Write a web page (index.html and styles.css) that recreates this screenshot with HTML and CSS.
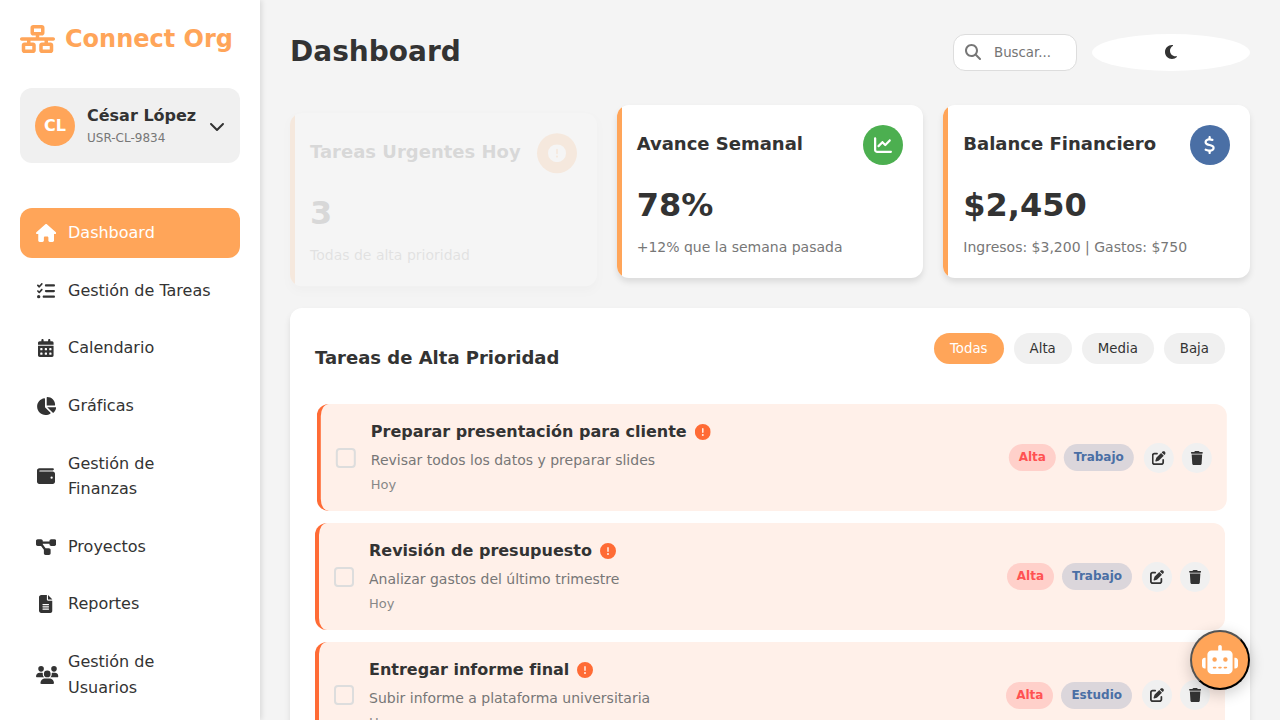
FILE: index.html
```html
<!DOCTYPE html>
<html lang="es">
<head>
<meta charset="UTF-8">
<title>Connect Org</title>
<link rel="stylesheet" href="styles.css">
</head>
<body>
<svg class="sprite" aria-hidden="true">
  <symbol id="i-network" viewBox="0 0 640 512"><path d="M256 64H384v64H256V64zM240 0c-26.5 0-48 21.5-48 48v96c0 26.5 21.5 48 48 48h48v32H32c-17.7 0-32 14.3-32 32s14.3 32 32 32h96v32H80c-26.5 0-48 21.5-48 48v96c0 26.5 21.5 48 48 48H240c26.5 0 48-21.5 48-48V368c0-26.5-21.5-48-48-48H192V288H448v32H400c-26.5 0-48 21.5-48 48v96c0 26.5 21.5 48 48 48H560c26.5 0 48-21.5 48-48V368c0-26.5-21.5-48-48-48H512V288h96c17.7 0 32-14.3 32-32s-14.3-32-32-32H352V192h48c26.5 0 48-21.5 48-48V48c0-26.5-21.5-48-48-48H240zM96 448V384H224v64H96zm320-64H544v64H416V384z"/></symbol>
  <symbol id="i-chevron" viewBox="0 0 512 512"><path d="M233.4 406.6c12.5 12.5 32.8 12.5 45.3 0l192-192c12.5-12.5 12.5-32.8 0-45.3s-32.8-12.5-45.3 0L256 338.7 86.6 169.4c-12.5-12.5-32.8-12.5-45.3 0s-12.5 32.8 0 45.3l192 192z"/></symbol>
  <symbol id="i-home" viewBox="0 0 576 512"><path d="M575.8 255.5c0 18-15 32.1-32 32.1h-32l.7 160.2c0 2.7-.2 5.4-.5 8.1V472c0 22.1-17.9 40-40 40H456c-1.1 0-2.2 0-3.3-.1c-1.4 .1-2.8 .1-4.2 .1H416 392c-22.1 0-40-17.9-40-40V448 384c0-17.7-14.3-32-32-32H256c-17.7 0-32 14.3-32 32v64 24c0 22.1-17.9 40-40 40H160 128.1c-1.5 0-3-.1-4.5-.2c-1.2 .1-2.4 .2-3.6 .2H104c-22.1 0-40-17.9-40-40V360c0-.9 0-1.9 .1-2.8V287.6H32c-18 0-32-14-32-32.1c0-9 3-17 10-24L266.4 8c7-7 15-8 22-8s15 2 21 7L564.8 231.5c8 7 12 15 11 24z"/></symbol>
  <symbol id="i-tasks" viewBox="0 0 512 512"><path d="M152.1 38.2c9.9 8.9 10.7 24 1.8 33.9l-72 80c-4.4 4.9-10.6 7.8-17.2 7.9s-12.9-2.4-17.6-7L7 113C-2.3 103.6-2.3 88.4 7 79s24.6-9.4 33.9 0l22.1 22.1 55.1-61.2c8.9-9.9 24-10.7 33.9-1.8zm0 160c9.9 8.9 10.7 24 1.8 33.9l-72 80c-4.4 4.9-10.6 7.8-17.2 7.9s-12.9-2.4-17.6-7L7 273c-9.4-9.4-9.4-24.6 0-33.9s24.6-9.4 33.9 0l22.1 22.1 55.1-61.2c8.9-9.9 24-10.7 33.9-1.8zM224 96c0-17.7 14.3-32 32-32H480c17.7 0 32 14.3 32 32s-14.3 32-32 32H256c-17.7 0-32-14.3-32-32zm0 160c0-17.7 14.3-32 32-32H480c17.7 0 32 14.3 32 32s-14.3 32-32 32H256c-17.7 0-32-14.3-32-32zM160 416c0-17.7 14.3-32 32-32H480c17.7 0 32 14.3 32 32s-14.3 32-32 32H192c-17.7 0-32-14.3-32-32zM48 368a48 48 0 1 1 0 96 48 48 0 1 1 0-96z"/></symbol>
  <symbol id="i-calendar" viewBox="0 0 448 512"><path d="M128 0c17.7 0 32 14.3 32 32V64H288V32c0-17.7 14.3-32 32-32s32 14.3 32 32V64h48c26.5 0 48 21.5 48 48v48H0V112C0 85.5 21.5 64 48 64H96V32c0-17.7 14.3-32 32-32zM0 192H448V464c0 26.5-21.5 48-48 48H48c-26.5 0-48-21.5-48-48V192zm64 80v32c0 8.8 7.2 16 16 16h32c8.8 0 16-7.2 16-16V272c0-8.8-7.2-16-16-16H80c-8.8 0-16 7.2-16 16zm128 0v32c0 8.8 7.2 16 16 16h32c8.8 0 16-7.2 16-16V272c0-8.8-7.2-16-16-16H208c-8.8 0-16 7.2-16 16zm144-16c-8.8 0-16 7.2-16 16v32c0 8.8 7.2 16 16 16h32c8.8 0 16-7.2 16-16V272c0-8.8-7.2-16-16-16H336zM64 400v32c0 8.8 7.2 16 16 16h32c8.8 0 16-7.2 16-16V400c0-8.8-7.2-16-16-16H80c-8.8 0-16 7.2-16 16zm144-16c-8.8 0-16 7.2-16 16v32c0 8.8 7.2 16 16 16h32c8.8 0 16-7.2 16-16V400c0-8.8-7.2-16-16-16H208zm112 16v32c0 8.8 7.2 16 16 16h32c8.8 0 16-7.2 16-16V400c0-8.8-7.2-16-16-16H336c-8.8 0-16 7.2-16 16z"/></symbol>
  <symbol id="i-pie" viewBox="0 0 576 512"><path d="M304 240V16.6c0-9 7-16.6 16-16.6C443.7 0 544 100.3 544 224c0 9-7.6 16-16.6 16H304zM32 272C32 150.7 122.1 50.3 239 34.3c9.2-1.3 17 6.1 17 15.4V288L412.5 444.5c6.7 6.7 6.2 17.7-1.5 23.1C371.8 495.6 323.8 512 272 512C139.5 512 32 404.6 32 272zm526.4 16c9.3 0 16.6 7.8 15.4 17c-7.7 55.9-34.6 105.6-73.9 142.3c-6 5.6-15.4 5.2-21.2-.7L320 288H558.4z"/></symbol>
  <symbol id="i-wallet" viewBox="0 0 512 512"><path d="M64 32C28.7 32 0 60.7 0 96V416c0 35.3 28.7 64 64 64H448c35.3 0 64-28.7 64-64V192c0-35.3-28.7-64-64-64H80c-8.8 0-16-7.2-16-16s7.2-16 16-16H448c17.7 0 32-14.3 32-32s-14.3-32-32-32H64zM416 272a32 32 0 1 1 0 64 32 32 0 1 1 0-64z"/></symbol>
  <symbol id="i-diagram" viewBox="0 0 576 512"><path d="M0 80C0 53.5 21.5 32 48 32h96c26.5 0 48 21.5 48 48V96H384V80c0-26.5 21.5-48 48-48h96c26.5 0 48 21.5 48 48v96c0 26.5-21.5 48-48 48H432c-26.5 0-48-21.5-48-48V160H192v16c0 1.7-.1 3.4-.3 5L272 288h96c26.5 0 48 21.5 48 48v96c0 26.5-21.5 48-48 48H272c-26.5 0-48-21.5-48-48V336c0-1.7 .1-3.4 .3-5L144 224H48c-26.5 0-48-21.5-48-48V80z"/></symbol>
  <symbol id="i-file" viewBox="0 0 384 512"><path d="M64 0C28.7 0 0 28.7 0 64V448c0 35.3 28.7 64 64 64H320c35.3 0 64-28.7 64-64V160H256c-17.7 0-32-14.3-32-32V0H64zM256 0V128H384L256 0zM112 256H272c8.8 0 16 7.2 16 16s-7.2 16-16 16H112c-8.8 0-16-7.2-16-16s7.2-16 16-16zm0 64H272c8.8 0 16 7.2 16 16s-7.2 16-16 16H112c-8.8 0-16-7.2-16-16s7.2-16 16-16zm0 64H272c8.8 0 16 7.2 16 16s-7.2 16-16 16H112c-8.8 0-16-7.2-16-16s7.2-16 16-16z"/></symbol>
  <symbol id="i-users" viewBox="0 0 640 512"><path d="M144 0a80 80 0 1 1 0 160A80 80 0 1 1 144 0zM512 0a80 80 0 1 1 0 160A80 80 0 1 1 512 0zM0 298.7C0 239.8 47.8 192 106.7 192h42.7c15.9 0 31 3.5 44.6 9.7c-1.3 7.2-1.9 14.7-1.9 22.3c0 38.2 16.8 72.5 43.3 96c-.2 0-.4 0-.7 0H21.3C9.6 320 0 310.4 0 298.7zM405.3 320c-.2 0-.4 0-.7 0c26.6-23.5 43.3-57.8 43.3-96c0-7.6-.7-15-1.9-22.3c13.6-6.3 28.7-9.7 44.6-9.7h42.7C592.2 192 640 239.8 640 298.7c0 11.8-9.6 21.3-21.3 21.3H405.3zM224 224a96 96 0 1 1 192 0 96 96 0 1 1 -192 0zM128 485.3C128 411.7 187.7 352 261.3 352H378.7C452.3 352 512 411.7 512 485.3c0 14.7-11.9 26.7-26.7 26.7H154.7c-14.7 0-26.7-11.9-26.7-26.7z"/></symbol>
  <symbol id="i-search" viewBox="0 0 512 512"><path d="M416 208c0 45.9-14.9 88.3-40 122.7L502.6 457.4c12.5 12.5 12.5 32.8 0 45.3s-32.8 12.5-45.3 0L330.7 376c-34.4 25.2-76.8 40-122.7 40C93.1 416 0 322.9 0 208S93.1 0 208 0S416 93.1 416 208zM208 352a144 144 0 1 0 0-288 144 144 0 1 0 0 288z"/></symbol>
  <symbol id="i-moon" viewBox="0 0 384 512"><path d="M223.5 32C100 32 0 132.3 0 256S100 480 223.5 480c60.6 0 115.5-24.2 155.8-63.4c5-4.9 6.3-12.5 3.1-18.7s-10.1-9.7-17-8.5c-9.8 1.7-19.8 2.6-30.1 2.6c-96.9 0-175.5-78.8-175.5-176c0-65.8 36-123.1 89.3-153.3c6.1-3.5 9.2-10.5 7.7-17.3s-7.3-11.9-14.3-12.5c-6.3-.5-12.6-.8-19-.8z"/></symbol>
  <symbol id="i-alert" viewBox="0 0 512 512"><path d="M256 512A256 256 0 1 0 256 0a256 256 0 1 0 0 512zm0-384c13.3 0 24 10.7 24 24V264c0 13.3-10.7 24-24 24s-24-10.7-24-24V152c0-13.3 10.7-24 24-24zM224 352a32 32 0 1 1 64 0 32 32 0 1 1 -64 0z"/></symbol>
  <symbol id="i-chart" viewBox="0 0 512 512"><path d="M64 64c0-17.7-14.3-32-32-32S0 46.3 0 64V400c0 44.2 35.8 80 80 80H480c17.7 0 32-14.3 32-32s-14.3-32-32-32H80c-8.8 0-16-7.2-16-16V64zm406.6 86.6c12.5-12.5 12.5-32.8 0-45.3s-32.8-12.5-45.3 0L320 210.7l-57.4-57.4c-12.5-12.5-32.8-12.5-45.3 0l-112 112c-12.5 12.5-12.5 32.8 0 45.3s32.8 12.5 45.3 0L240 221.3l57.4 57.4c12.5 12.5 32.8 12.5 45.3 0l128-128z"/></symbol>
  <symbol id="i-dollar" viewBox="0 0 320 512"><path d="M160 0c17.7 0 32 14.3 32 32V67.7c1.6 .2 3.1 .4 4.7 .7c.4 .1 .7 .1 1.1 .2l48 8.8c17.4 3.2 28.9 19.9 25.7 37.2s-19.9 28.9-37.2 25.7l-47.5-8.7c-31.3-4.6-58.9-1.5-78.3 6.2s-27.2 18.3-29 28.1c-2 10.7-.5 16.7 1.2 20.4c1.8 3.9 5.5 8.3 12.8 13.2c16.3 10.7 41.3 17.7 73.7 26.3l2.9 .8c28.6 7.6 63.6 16.8 89.6 33.8c14.2 9.3 27.6 21.9 35.9 39.5c8.5 17.9 10.3 37.9 6.4 59.2c-6.9 38-33.1 63.4-65.6 76.7c-13.7 5.6-28.6 9.2-44.4 11V480c0 17.7-14.3 32-32 32s-32-14.3-32-32V445.1c-.4-.1-.9-.1-1.3-.2l-.2 0 0 0c-24.4-3.8-64.5-14.3-91.5-26.3c-16.1-7.2-23.4-26.1-16.2-42.2s26.1-23.4 42.2-16.2c20.9 9.3 55.3 18.5 75.2 21.6c31.9 4.7 58.2 2 76-5.3c16.9-6.9 24.6-16.9 26.8-28.9c1.9-10.6 .4-16.7-1.3-20.4c-1.9-4-5.6-8.4-13-13.3c-16.4-10.7-41.5-17.7-74-26.3l-2.8-.7 0 0C119.4 279.3 84.4 270 58.4 253c-14.2-9.3-27.5-22-35.8-39.6c-8.4-17.9-10.1-37.9-6.1-59.2C23.7 116 52.3 91.2 84.8 78.3c13.3-5.3 27.9-8.9 43.2-11V32c0-17.7 14.3-32 32-32z"/></symbol>
  <symbol id="i-edit" viewBox="0 0 512 512"><path d="M471.6 21.7c-21.9-21.9-57.3-21.9-79.2 0L362.3 51.7l97.9 97.9 30.1-30.1c21.9-21.9 21.9-57.3 0-79.2L471.6 21.7zm-299.2 220c-6.1 6.1-10.8 13.6-13.5 21.9l-29.6 88.8c-2.9 8.6-.6 18.1 5.8 24.6s15.9 8.7 24.6 5.8l88.8-29.6c8.2-2.7 15.7-7.4 21.9-13.5L437.7 172.3 339.7 74.3 172.4 241.7zM96 64C43 64 0 107 0 160V416c0 53 43 96 96 96H352c53 0 96-43 96-96V320c0-17.7-14.3-32-32-32s-32 14.3-32 32v96c0 17.7-14.3 32-32 32H96c-17.7 0-32-14.3-32-32V160c0-17.7 14.3-32 32-32h96c17.7 0 32-14.3 32-32s-14.3-32-32-32H96z"/></symbol>
  <symbol id="i-trash" viewBox="0 0 448 512"><path d="M135.2 17.7L128 32H32C14.3 32 0 46.3 0 64S14.3 96 32 96H416c17.7 0 32-14.3 32-32s-14.3-32-32-32H320l-7.2-14.3C307.4 6.8 296.3 0 284.2 0H163.8c-12.1 0-23.2 6.8-28.6 17.7zM416 128H32L53.2 467c1.6 25.3 22.6 45 47.9 45H346.9c25.3 0 46.3-19.7 47.9-45L416 128z"/></symbol>
  <symbol id="i-robot" viewBox="0 0 640 512"><path d="M320 0c17.7 0 32 14.3 32 32V96H472c39.8 0 72 32.2 72 72V440c0 39.8-32.2 72-72 72H168c-39.8 0-72-32.2-72-72V168c0-39.8 32.2-72 72-72H288V32c0-17.7 14.3-32 32-32zM208 384c-8.8 0-16 7.2-16 16s7.2 16 16 16h32c8.8 0 16-7.2 16-16s-7.2-16-16-16H208zm96 0c-8.8 0-16 7.2-16 16s7.2 16 16 16h32c8.8 0 16-7.2 16-16s-7.2-16-16-16H304zm96 0c-8.8 0-16 7.2-16 16s7.2 16 16 16h32c8.8 0 16-7.2 16-16s-7.2-16-16-16H400zM264 256a40 40 0 1 0 -80 0 40 40 0 1 0 80 0zm152 40a40 40 0 1 0 0-80 40 40 0 1 0 0 80zM48 224H64V416H48c-26.5 0-48-21.5-48-48V272c0-26.5 21.5-48 48-48zm544 0c26.5 0 48 21.5 48 48v96c0 26.5-21.5 48-48 48H576V224h16z"/></symbol>
</svg>

<div class="app">
  <aside class="sidebar">
    <div class="logo">
      <svg class="icon logo-icon"><use href="#i-network"/></svg>
      <span>Connect Org</span>
    </div>
    <div class="profile">
      <div class="avatar">CL</div>
      <div class="profile-info">
        <div class="profile-name">César López</div>
        <div class="profile-id">USR-CL-9834</div>
      </div>
      <svg class="icon chevron"><use href="#i-chevron"/></svg>
    </div>
    <nav class="menu">
      <a class="menu-item active"><span class="menu-icon"><svg class="icon w576"><use href="#i-home"/></svg></span><span>Dashboard</span></a>
      <a class="menu-item"><span class="menu-icon"><svg class="icon w512"><use href="#i-tasks"/></svg></span><span>Gestión de Tareas</span></a>
      <a class="menu-item"><span class="menu-icon"><svg class="icon w448"><use href="#i-calendar"/></svg></span><span>Calendario</span></a>
      <a class="menu-item"><span class="menu-icon"><svg class="icon w576"><use href="#i-pie"/></svg></span><span>Gráficas</span></a>
      <a class="menu-item"><span class="menu-icon"><svg class="icon w512"><use href="#i-wallet"/></svg></span><span>Gestión de<br>Finanzas</span></a>
      <a class="menu-item"><span class="menu-icon"><svg class="icon w576"><use href="#i-diagram"/></svg></span><span>Proyectos</span></a>
      <a class="menu-item"><span class="menu-icon"><svg class="icon w384"><use href="#i-file"/></svg></span><span>Reportes</span></a>
      <a class="menu-item"><span class="menu-icon"><svg class="icon w640"><use href="#i-users"/></svg></span><span>Gestión de<br>Usuarios</span></a>
    </nav>
  </aside>

  <main class="main">
    <header class="header">
      <h1 class="page-title">Dashboard</h1>
      <div class="header-actions">
        <div class="search">
          <svg class="icon search-icon"><use href="#i-search"/></svg>
          <input class="search-input" type="text" placeholder="Buscar...">
        </div>
        <button class="theme-toggle"><svg class="icon moon"><use href="#i-moon"/></svg></button>
      </div>
    </header>

    <section class="cards">
      <article class="card entering">
        <div class="card-head">
          <h3 class="card-title">Tareas Urgentes Hoy</h3>
          <div class="card-icon orange"><svg class="icon w512"><use href="#i-alert"/></svg></div>
        </div>
        <div class="card-value">3</div>
        <div class="card-note">Todas de alta prioridad</div>
      </article>
      <article class="card">
        <div class="card-head">
          <h3 class="card-title">Avance Semanal</h3>
          <div class="card-icon green"><svg class="icon w512"><use href="#i-chart"/></svg></div>
        </div>
        <div class="card-value">78%</div>
        <div class="card-note">+12% que la semana pasada</div>
      </article>
      <article class="card">
        <div class="card-head">
          <h3 class="card-title">Balance Financiero</h3>
          <div class="card-icon blue"><svg class="icon w320 dollar"><use href="#i-dollar"/></svg></div>
        </div>
        <div class="card-value">$2,450</div>
        <div class="card-note">Ingresos: $3,200 | Gastos: $750</div>
      </article>
    </section>

    <section class="panel">
      <div class="panel-head">
        <h3 class="panel-title">Tareas de Alta Prioridad</h3>
        <div class="filters">
          <button class="filter selected">Todas</button>
          <button class="filter">Alta</button>
          <button class="filter">Media</button>
          <button class="filter">Baja</button>
        </div>
      </div>
      <ul class="tasks">
        <li class="task shifted">
          <div class="checkbox"></div>
          <div class="task-body">
            <div class="task-title">Preparar presentación para cliente<svg class="icon alert"><use href="#i-alert"/></svg></div>
            <div class="task-desc">Revisar todos los datos y preparar slides</div>
            <div class="task-date">Hoy</div>
          </div>
          <div class="tags"><span class="tag high">Alta</span><span class="tag category">Trabajo</span></div>
          <div class="actions">
            <button class="action"><svg class="icon edit"><use href="#i-edit"/></svg></button>
            <button class="action"><svg class="icon trash"><use href="#i-trash"/></svg></button>
          </div>
        </li>
        <li class="task">
          <div class="checkbox"></div>
          <div class="task-body">
            <div class="task-title">Revisión de presupuesto<svg class="icon alert"><use href="#i-alert"/></svg></div>
            <div class="task-desc">Analizar gastos del último trimestre</div>
            <div class="task-date">Hoy</div>
          </div>
          <div class="tags"><span class="tag high">Alta</span><span class="tag category">Trabajo</span></div>
          <div class="actions">
            <button class="action"><svg class="icon edit"><use href="#i-edit"/></svg></button>
            <button class="action"><svg class="icon trash"><use href="#i-trash"/></svg></button>
          </div>
        </li>
        <li class="task">
          <div class="checkbox"></div>
          <div class="task-body">
            <div class="task-title">Entregar informe final<svg class="icon alert"><use href="#i-alert"/></svg></div>
            <div class="task-desc">Subir informe a plataforma universitaria</div>
            <div class="task-date">Hoy</div>
          </div>
          <div class="tags"><span class="tag high">Alta</span><span class="tag category">Estudio</span></div>
          <div class="actions">
            <button class="action"><svg class="icon edit"><use href="#i-edit"/></svg></button>
            <button class="action"><svg class="icon trash"><use href="#i-trash"/></svg></button>
          </div>
        </li>
      </ul>
    </section>
  </main>
</div>
<button class="assistant"><svg class="icon robot"><use href="#i-robot"/></svg></button>
</body>
</html>
```
FILE: styles.css
```css
* {
  box-sizing: border-box;
  margin: 0;
  padding: 0;
}

body {
  height: 720px;
  overflow: hidden;
  background: #f4f4f4;
  color: #333;
  font-family: "DejaVu Sans", sans-serif;
  font-size: 16px;
  line-height: 1.6;
}

button,
input {
  font-family: inherit;
}

.sprite {
  display: none;
}

.icon {
  display: block;
  flex: none;
  height: 1em;
  fill: currentColor;
}

.w320 { width: 0.625em; }
.w384 { width: 0.75em; }
.w448 { width: 0.875em; }
.w512 { width: 1em; }
.w576 { width: 1.125em; }
.w640 { width: 1.25em; }

.app {
  display: flex;
  height: 720px;
  overflow: hidden;
}

/* Sidebar */
.sidebar {
  flex: none;
  width: 260px;
  padding: 20px;
  background: #fff;
  box-shadow: 2px 0 5px rgba(0, 0, 0, 0.1);
  overflow: hidden;
}

.logo {
  display: flex;
  align-items: center;
  gap: 10px;
  margin-bottom: 30px;
  color: #ffa559;
  font-size: 24px;
  font-weight: 700;
}

.logo-icon {
  width: 35px;
  height: 28px;
  margin-bottom: 1px;
}

.profile {
  display: flex;
  align-items: center;
  gap: 12px;
  margin-bottom: 45px;
  padding: 15px;
  border-radius: 12px;
  background: #f0f0f0;
}

.avatar {
  display: flex;
  align-items: center;
  justify-content: center;
  flex: none;
  width: 40px;
  height: 40px;
  border-radius: 50%;
  background: #ffa559;
  color: #fff;
  font-weight: 700;
}

.profile-info {
  flex: 1;
  white-space: nowrap;
}

.profile-name {
  font-weight: 600;
}

.profile-id {
  color: #777;
  font-size: 12px;
}

.chevron {
  width: 16px;
}

.menu {
  display: flex;
  flex-direction: column;
  gap: 8px;
}

.menu-item {
  display: flex;
  align-items: center;
  gap: 12px;
  padding: 12px 16px;
  border-radius: 12px;
}

.menu-item.active {
  background: #ffa559;
  color: #fff;
}

.menu-icon {
  display: flex;
  justify-content: safe center;
  flex: none;
  width: 20px;
  font-size: 18px;
}

/* Main column */
.main {
  flex: 1;
  padding: 30px;
}

.header {
  display: flex;
  align-items: center;
  justify-content: space-between;
  margin-bottom: 30px;
}

.page-title {
  font-size: 28px;
}

.header-actions {
  display: flex;
  gap: 15px;
}

.search {
  position: relative;
  width: 124px;
}

.search-icon {
  position: absolute;
  top: 10px;
  left: 12px;
  width: 16px;
  color: #777;
}

.search-input {
  display: block;
  width: 100%;
  height: 37px;
  padding: 10px 15px 10px 40px;
  border: 1px solid #ddd;
  border-radius: 12px;
  background: #fff;
  font-size: 13.333px;
}

.search-input::placeholder {
  color: #757575;
}

.theme-toggle {
  display: flex;
  align-items: center;
  justify-content: center;
  width: 158px;
  height: 37px;
  border: 0;
  border-radius: 50%;
  background: #fff;
  color: #333;
}

.moon {
  width: 12px;
  height: 16px;
}

/* Summary cards */
.cards {
  display: grid;
  grid-template-columns: repeat(3, 1fr);
  gap: 20px;
  margin-bottom: 30px;
}

.card {
  position: relative;
  padding: 20px;
  border-radius: 12px;
  background: #fff;
  box-shadow: 0 4px 6px rgba(0, 0, 0, 0.1);
  overflow: hidden;
}

.card::before {
  content: "";
  position: absolute;
  top: 0;
  left: 0;
  width: 5px;
  height: 100%;
  background: #ffa559;
}

.card.entering {
  opacity: 0.14;
  transform: translateY(8.2px);
}

.card-head {
  display: flex;
  align-items: center;
  justify-content: space-between;
  margin-bottom: 15px;
}

.card-title {
  font-size: 18px;
  font-weight: 600;
}

.card-icon {
  display: flex;
  align-items: center;
  justify-content: center;
  width: 40px;
  height: 40px;
  border-radius: 50%;
  color: #fff;
  font-size: 18px;
}

.dollar {
  margin-right: 1px;
}

.orange { background: #ffa559; }
.green { background: #4caf50; }
.blue { background: #4a6fa5; }

.card-value {
  margin-bottom: 5px;
  font-size: 32px;
  font-weight: 700;
}

.card-note {
  color: #777;
  font-size: 14px;
}

/* Task panel */
.panel {
  height: 600px;
  padding: 25px;
  border-radius: 12px;
  background: #fff;
  box-shadow: 0 4px 6px rgba(0, 0, 0, 0.1);
}

.panel-head {
  display: flex;
  align-items: flex-start;
  justify-content: space-between;
  height: 71px;
}

.panel-title {
  margin-top: 11px;
  font-size: 18px;
}

.filters {
  display: flex;
  gap: 10px;
}

.filter {
  height: 31px;
  padding: 0 16px;
  border: 0;
  border-radius: 20px;
  background: #f0f0f0;
  color: #333;
  font-size: 13.333px;
}

.filter.selected {
  background: #ffa559;
  color: #fff;
}

.tasks {
  display: flex;
  flex-direction: column;
  gap: 12px;
  list-style: none;
}

.task {
  display: flex;
  align-items: center;
  padding: 15px;
  border-left: 4px solid #ff6b35;
  border-radius: 12px;
  background: #fff0e9;
}

.task.shifted {
  transform: translateX(1.8px);
}

.checkbox {
  flex: none;
  width: 20px;
  height: 20px;
  margin-right: 15px;
  border: 2px solid #ddd;
  border-radius: 4px;
}

.task-body {
  flex: 1;
}

.task-title {
  display: flex;
  align-items: center;
  gap: 8px;
  margin-bottom: 4px;
  font-weight: 600;
}

.alert {
  width: 16px;
  color: #ff6b35;
}

.task-desc {
  margin-bottom: 4px;
  color: #777;
  font-size: 14px;
}

.task-date {
  color: #888;
  font-size: 13px;
}

.tags {
  display: flex;
  gap: 8px;
  margin-right: 10px;
}

.tag {
  padding: 4px 10px;
  border-radius: 20px;
  font-size: 12px;
  font-weight: 600;
}

.high {
  background: rgba(255, 82, 82, 0.2);
  color: #ff5252;
}

.category {
  background: rgba(74, 111, 165, 0.2);
  color: #4a6fa5;
}

.actions {
  display: flex;
  gap: 8px;
}

.action {
  display: flex;
  align-items: center;
  justify-content: center;
  width: 30px;
  height: 30px;
  border: 0;
  border-radius: 50%;
  background: #f0f0f0;
  color: #333;
  font-size: 14px;
}

.edit { width: 1em; }
.trash { width: 0.875em; }

/* Floating assistant button */
.assistant {
  position: fixed;
  right: 30px;
  bottom: 30px;
  display: flex;
  align-items: center;
  justify-content: center;
  width: 60px;
  height: 60px;
  border: 2px outset #000;
  border-radius: 50%;
  background: #ffa559;
  color: #fff;
  box-shadow: 0 4px 15px rgba(0, 0, 0, 0.2);
}

.robot {
  width: 36px;
  height: 29px;
  margin-bottom: 2px;
}
```
